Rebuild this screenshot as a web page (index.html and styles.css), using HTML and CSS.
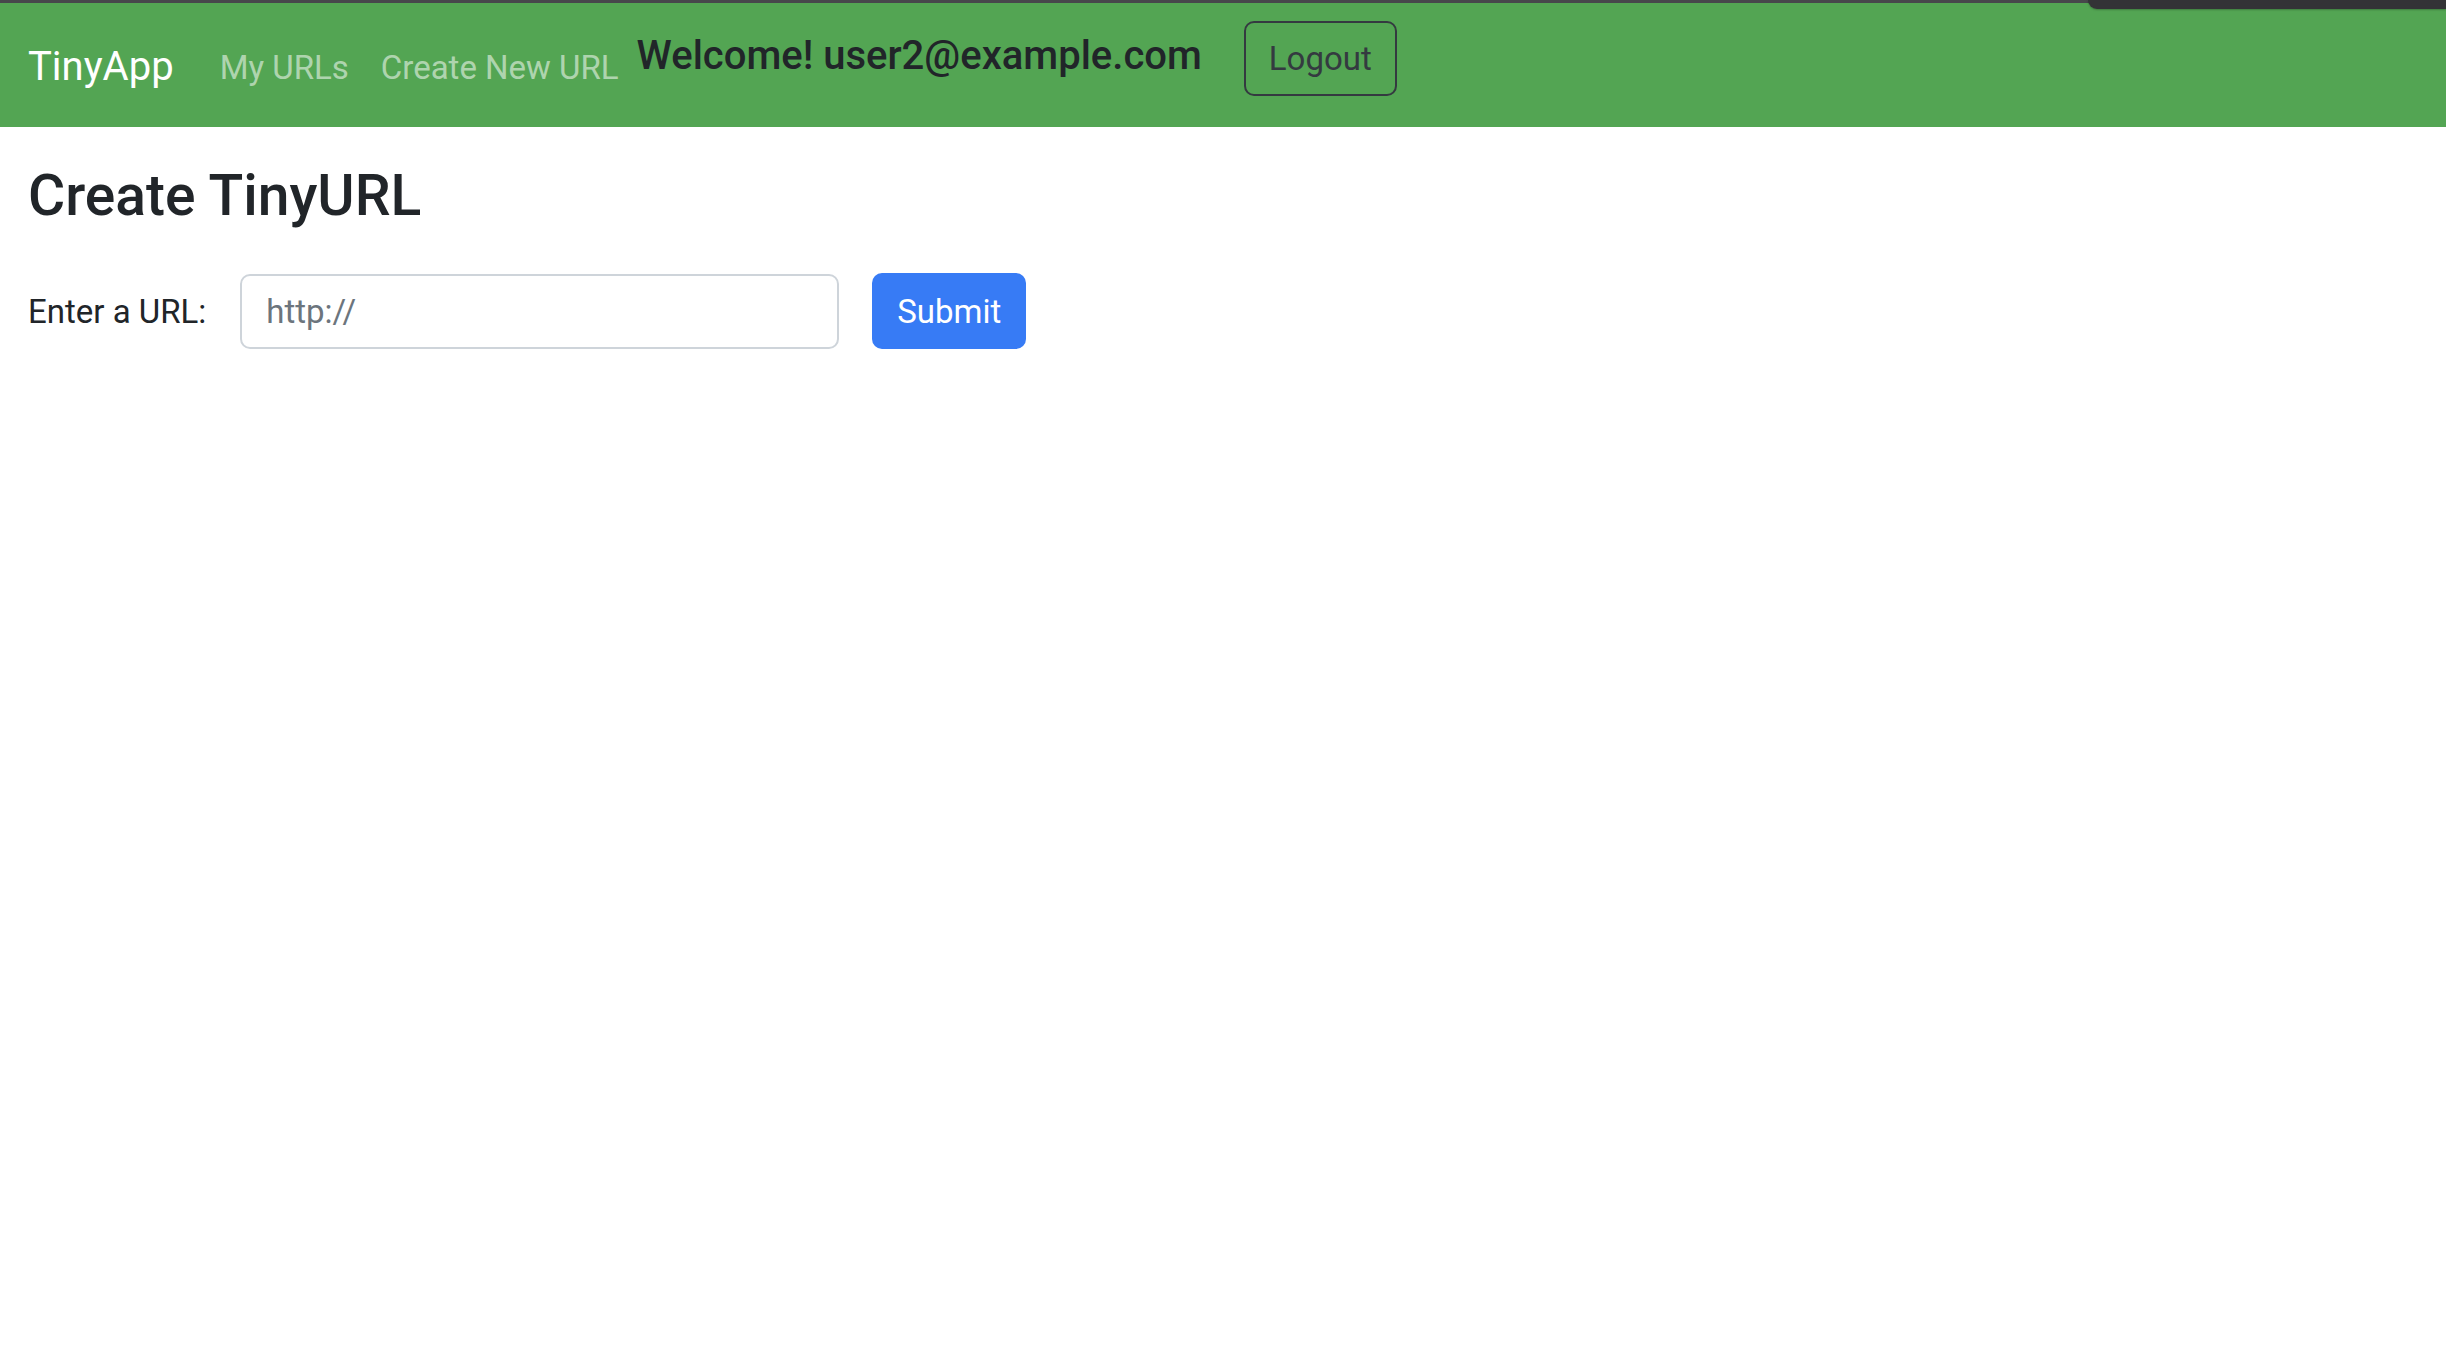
FILE: index.html
```html
<!DOCTYPE html>
<html lang="en">
<head>
<meta charset="utf-8">
<title>TinyApp</title>
<link rel="stylesheet" href="styles.css">
</head>
<body>
<div class="chrome"><div class="chrome-tab"></div></div>
<nav class="navbar">
  <a class="brand" href="#">TinyApp</a>
  <ul class="nav-links">
    <li><a href="#">My URLs</a></li>
    <li><a href="#">Create New URL</a></li>
  </ul>
  <h5 class="welcome">Welcome! user2@example.com</h5>
  <button class="btn-logout" type="button">Logout</button>
</nav>
<main class="content">
  <h1 class="title">Create TinyURL</h1>
  <form class="url-form">
    <label class="url-label" for="longURL">Enter a URL:</label>
    <input class="url-input" id="longURL" type="text" placeholder="http://">
    <button class="btn-submit" type="submit">Submit</button>
  </form>
</main>
</body>
</html>
```
FILE: styles.css
```css
* { box-sizing: border-box; }
html, body { margin: 0; padding: 0; background: #ffffff; }
body {
  font-family: Roboto, "Liberation Sans", sans-serif;
  color: #212529;
  min-height: 1368px;
}
.chrome {
  position: relative;
  height: 3px;
  background: #47474b;
}
.chrome-tab {
  position: absolute;
  top: 0;
  left: 2088px;
  right: 0;
  height: 9px;
  background: #333336;
  border-bottom-left-radius: 10px;
  box-shadow: 0 1px 2px rgba(0,0,0,0.25);
  z-index: 2;
}
.navbar {
  height: 124px;
  background: #53a553;
  display: flex;
  align-items: center;
  padding-left: 28px;
}
.brand {
  font-size: 40px;
  color: #ffffff;
  text-decoration: none;
  margin-right: 46px;
  margin-top: 2px;
}
.nav-links {
  list-style: none;
  margin: 4px 0 0 0;
  padding: 0;
  display: flex;
  gap: 32px;
}
.nav-links a {
  font-size: 33px;
  color: rgba(255,255,255,0.55);
  text-decoration: none;
}
.welcome {
  margin: 0 0 20px 18px;
  font-size: 40px;
  font-weight: 500;
  color: #212529;
}
.btn-logout {
  margin-left: 42px;
  margin-bottom: 14px;
  width: 153px;
  height: 75px;
  background: transparent;
  border: 2px solid #343a40;
  border-radius: 10px;
  font-family: inherit;
  font-size: 33px;
  color: #343a40;
  padding: 0;
}
.content {
  padding: 0 28px;
}
.title {
  margin: 35px 0 0 0;
  font-size: 57px;
  font-weight: 500;
  line-height: 1.2;
}
.url-form {
  display: flex;
  align-items: center;
  margin-top: 43px;
}
.url-label {
  font-size: 33px;
  margin-right: 34px;
}
.url-input {
  width: 599px;
  height: 75px;
  border: 2px solid #ced4da;
  border-radius: 10px;
  padding: 0 24px;
  font-family: inherit;
  font-size: 33px;
  color: #212529;
}
.url-input::placeholder { color: #6c757d; }
.btn-submit {
  margin-left: 33px;
  width: 154px;
  height: 76px;
  border: none;
  border-radius: 10px;
  background: #377bf5;
  color: #ffffff;
  font-family: inherit;
  font-size: 33px;
  padding: 0;
}
```
